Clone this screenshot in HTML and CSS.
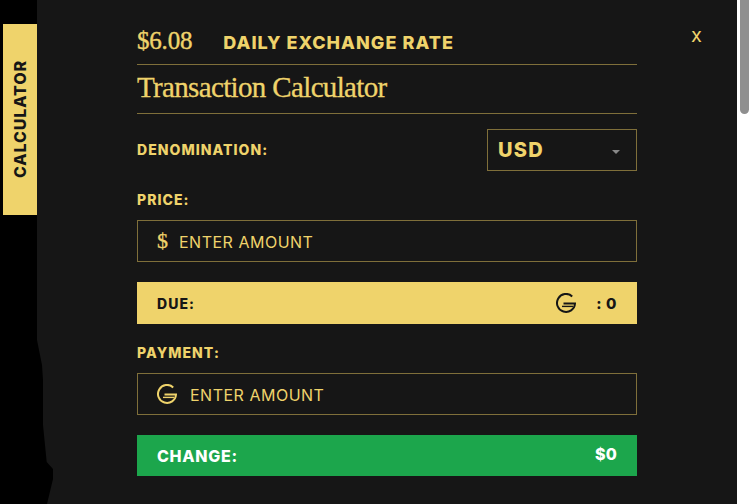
FILE: index.html
```html
<!DOCTYPE html>
<html lang="en">
<head>
    <meta charset="UTF-8">
    <meta name="viewport" content="width=device-width, initial-scale=1.0">
    <title>Transaction Calculator</title>
    <link rel="stylesheet" href="styles.css">
</head>
<body>

<!-- G coin icon, used twice -->
<svg class="defs" width="0" height="0">
    <symbol id="coin" viewBox="0 0 20 20">
        <path d="M16.2 3.4A9 9 0 1 0 19 10.5H7.5" fill="none" stroke="currentColor" stroke-width="2"/>
        <path d="M6 13.4H17" fill="none" stroke="currentColor" stroke-width="1.4"/>
    </symbol>
</svg>

<div class="sidebar">
    <div class="tab"><span>CALCULATOR</span></div>
</div>

<div class="panel">
    <!-- torn edge of the panel -->
    <svg class="edge" width="20" height="164" viewBox="0 0 20 164">
        <path d="M0 0L1 5L3 15L5 25L6 40L6 85L9.7 122L16 129L16 139L10 164L0 164Z" fill="#000"/>
    </svg>

    <div class="content">
        <div class="rate">
            <span class="rate-value">$6.08</span>
            <span class="rate-label">DAILY EXCHANGE RATE</span>
        </div>
        <h1 class="heading">Transaction Calculator</h1>

        <div class="denomination">
            <label class="field-label">DENOMINATION:</label>
            <div class="select-box">
                <select class="select">
                    <option>USD</option>
                </select>
            </div>
        </div>

        <label class="field-label price-label">PRICE:</label>
        <div class="input-box">
            <span class="dollar">$</span>
            <input class="input" type="text" placeholder="ENTER AMOUNT">
        </div>

        <div class="bar due">
            <span>DUE:</span>
            <span class="due-value">
                <svg class="coin-dark" width="20" height="20"><use href="#coin"/></svg>
                <span>: 0</span>
            </span>
        </div>

        <label class="field-label payment-label">PAYMENT:</label>
        <div class="input-box">
            <svg class="coin-gold" width="20" height="20"><use href="#coin"/></svg>
            <input class="input" type="text" placeholder="ENTER AMOUNT">
        </div>

        <div class="bar change">
            <span>CHANGE:</span>
            <span class="change-value">$0</span>
        </div>
    </div>

    <button class="close">x</button>
</div>

<div class="scrollbar">
    <div class="thumb"></div>
</div>

</body>
</html>
```

FILE: styles.css
```css
/* General Reset */
* {
    margin: 0;
    padding: 0;
    box-sizing: border-box;
}

body {
    font-family: 'Inter', 'Liberation Sans', sans-serif;
    background-color: #000;
    color: #efd36b;
    display: flex;
    height: 100vh;
    overflow: hidden;
}

.defs {
    position: absolute;
}

/* Left tab */
.sidebar {
    width: 37px;
    flex-shrink: 0;
    padding: 24px 0 0 3px;
}

.tab {
    width: 34px;
    height: 191px;
    background-color: #efd36b;
    color: #161616;
    display: flex;
    align-items: center;
    justify-content: center;
}

.tab span {
    writing-mode: vertical-rl;
    transform: rotate(180deg);
    font-size: 16px;
    font-weight: 800;
    letter-spacing: 0.9px;
}

/* Main panel */
.panel {
    position: relative;
    width: 700px;
    flex-shrink: 0;
    background-color: #161616;
    padding-left: 100px;
}

.edge {
    position: absolute;
    left: 0;
    bottom: 0;
}

.content {
    width: 500px;
}

.rate {
    height: 65px;
    padding-top: 18px;
    display: flex;
    align-items: center;
    gap: 31px;
    border-bottom: 1px solid #7f6f3a;
}

.rate-value {
    font-family: 'Liberation Serif', serif;
    font-size: 25px;
    letter-spacing: -0.2px;
    -webkit-text-stroke: 0.4px #efd36b;
}

.rate-label {
    font-size: 18px;
    font-weight: 800;
    letter-spacing: 1.05px;
    padding-top: 2px;
}

.heading {
    font-family: 'Liberation Serif', serif;
    font-size: 29px;
    font-weight: 400;
    letter-spacing: -0.65px;
    -webkit-text-stroke: 0.3px #efd36b;
    height: 49px;
    line-height: 45px;
    border-bottom: 1px solid #7f6f3a;
}

.denomination {
    display: flex;
    justify-content: space-between;
    align-items: center;
    margin-top: 15px;
}

.field-label {
    display: block;
    font-size: 14px;
    font-weight: 800;
    letter-spacing: 1.05px;
    line-height: 16px;
}

.price-label {
    margin-top: 21px;
}

.payment-label {
    margin-top: 21px;
}

.select-box {
    position: relative;
    width: 150px;
    height: 42px;
    border: 1px solid #7f6f3a;
}

.select-box::after {
    content: "";
    position: absolute;
    right: 16px;
    top: 20px;
    border-left: 4px solid transparent;
    border-right: 4px solid transparent;
    border-top: 4px solid #888;
}

.select {
    appearance: none;
    width: 100%;
    height: 100%;
    background: transparent;
    border: none;
    color: #efd36b;
    font-family: inherit;
    font-size: 20px;
    font-weight: 800;
    letter-spacing: 1.2px;
    padding-left: 10px;
}

.input-box {
    height: 42px;
    margin-top: 12px;
    border: 1px solid #7f6f3a;
    padding-left: 19px;
    display: flex;
    align-items: center;
    gap: 12px;
}

.dollar {
    font-family: 'Liberation Serif', serif;
    font-size: 22px;
    width: 10px;
    -webkit-text-stroke: 0.3px #efd36b;
}

.coin-gold {
    flex-shrink: 0;
    margin-right: 1px;
}

.input {
    flex: 1;
    background: transparent;
    border: none;
    color: #efd36b;
    font-family: inherit;
    font-size: 16px;
    letter-spacing: 0.5px;
    padding-top: 2px;
}

.input::placeholder {
    color: #efd36b;
    opacity: 1;
}

.bar {
    margin-top: 20px;
    padding: 0 20px;
    display: flex;
    justify-content: space-between;
    align-items: center;
    font-weight: 800;
}

.due {
    height: 42px;
    background-color: #efd36b;
    color: #161616;
    font-size: 14px;
    letter-spacing: 1.05px;
}

.due-value {
    display: flex;
    align-items: center;
    gap: 20px;
    font-size: 15px;
    letter-spacing: 0.6px;
}

.change {
    height: 41px;
    background-color: #1ca64c;
    color: #fff;
    font-size: 16px;
    letter-spacing: 0.7px;
}

.change-value {
    font-size: 16px;
    letter-spacing: 0.2px;
    margin-top: -4px;
}

.close {
    position: absolute;
    left: 654px;
    top: 23px;
    background: none;
    border: none;
    color: #efd36b;
    font-family: inherit;
    font-size: 20px;
}

/* Scroll track */
.scrollbar {
    flex: 1;
    background-color: #fff;
    padding-left: 3px;
}

.thumb {
    width: 9px;
    height: 114px;
    background-color: #8f8f8f;
    border-radius: 0 0 5px 5px;
}
```
